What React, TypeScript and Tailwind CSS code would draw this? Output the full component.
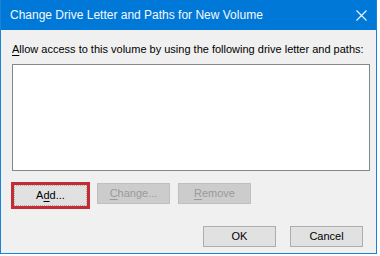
const font = { fontFamily: '"Liberation Sans", Arial, sans-serif' };

const Btn = ({
  label,
  accel,
  disabled,
  className = "",
}: {
  label: string;
  accel?: number;
  disabled?: boolean;
  className?: string;
}) => (
  <div
    className={`flex h-[21px] w-[73px] items-center justify-center border text-[11px] leading-none ${
      disabled
        ? "border-[#bfbfbf] bg-[#cccccc] text-[#9a9a9a]"
        : "border-[#adadad] bg-[#e1e1e1] text-black"
    } ${className}`}
  >
    {accel === undefined ? (
      label
    ) : (
      <span>
        {label.slice(0, accel)}
        <span className="underline underline-offset-2">{label[accel]}</span>
        {label.slice(accel + 1)}
      </span>
    )}
  </div>
);

export default function App() {
  return (
    <div className="h-[256px] w-[380px] bg-white" style={font}>
      <div className="flex h-[254px] w-[377px] flex-col border-x border-b border-[#1883d7] bg-[#0078d7]">
        <div className="flex h-[30px] shrink-0 items-center justify-between px-[9px] text-[12px] text-[#f4f9fd]">
          <span className="whitespace-nowrap">Change Drive Letter and Paths for New Volume</span>
          <svg width="11" height="11" viewBox="0 0 11 11" fill="none" stroke="currentColor" strokeWidth="1.1">
            <path d="M0.5 0.5 L10.5 10.5 M10.5 0.5 L0.5 10.5" />
          </svg>
        </div>
        <div className="flex flex-1 flex-col bg-[#f0f0f0] px-[11px]">
          <p className="mt-[11px] whitespace-nowrap text-[11px] leading-[16px] text-black">
            <span className="underline underline-offset-2">A</span>llow access to this volume by using the following drive letter and paths:
          </p>
          <div className="mt-[7px] h-[107px] w-[358px] border border-[#828790] bg-white" />
          <div className="mt-[12px] flex gap-[8px]">
            <div className="-m-[1px] border-[3px] border-[#c42b33]">
              <Btn label="Add..." accel={1} className="h-[17px] w-[69px] border-dotted border-[#333]" />
            </div>
            <Btn label="Change..." accel={0} disabled />
            <Btn label="Remove" accel={0} disabled />
          </div>
          <div className="mt-[18px] flex justify-end gap-[14px] pr-[2px]">
            <Btn label="OK" />
            <Btn label="Cancel" />
          </div>
        </div>
      </div>
    </div>
  );
}
